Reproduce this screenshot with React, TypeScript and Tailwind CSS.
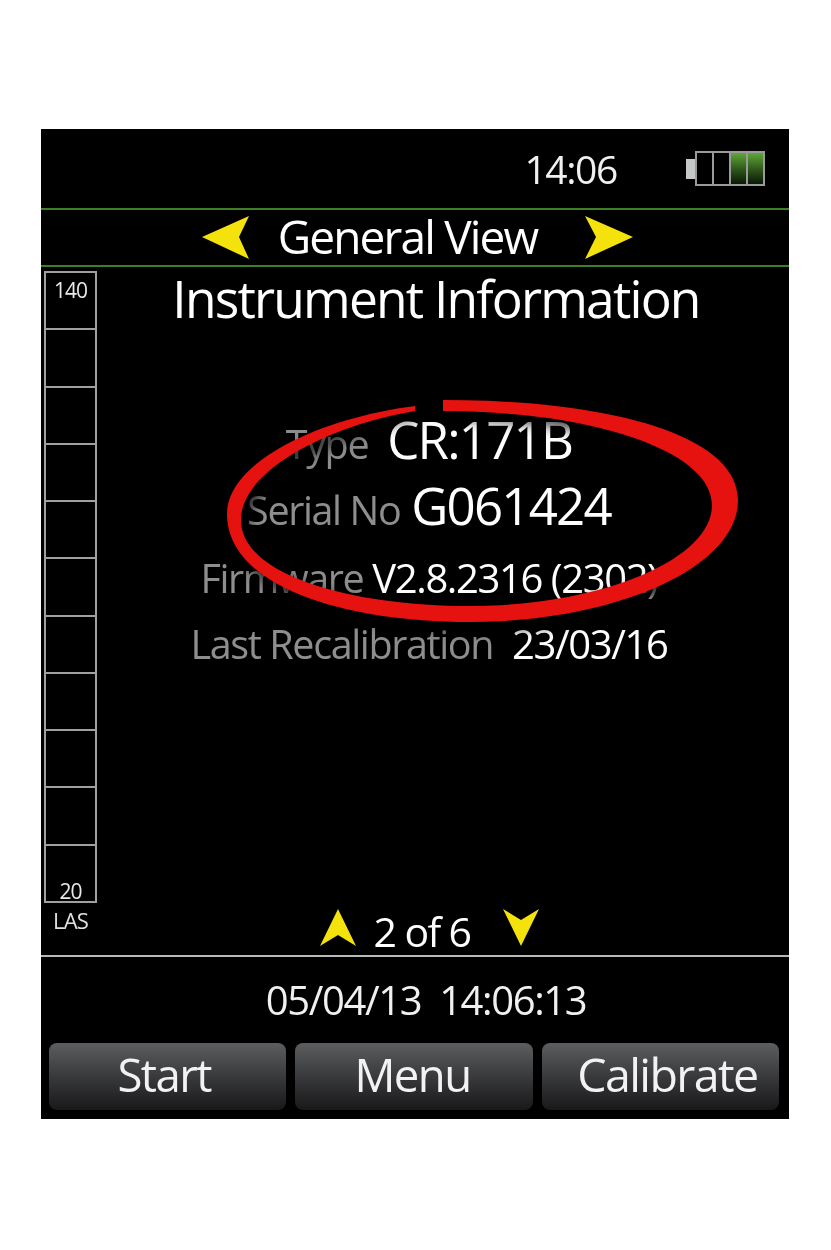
import React from 'react';

const FONT = "font-['Open_Sans','Noto_Sans',sans-serif]";

const Arrow = ({ points, box, className }: { points: string; box: string; className: string }) => (
  <svg viewBox={box} className={className}>
    <polygon points={points} fill="#f4e20c" />
  </svg>
);

const Battery = () => (
  <div className="flex items-center">
    <div className="w-[9px] h-[20px] bg-[#c4c8c6]" />
    <div className="flex w-[70px] h-[35px] border-2 border-[#9a9a9a]">
      <div className="flex-1 border-r-2 border-[#9a9a9a]" />
      <div className="flex-1 border-r-2 border-[#9a9a9a]" />
      <div className="flex-1 border-r-2 border-[#9a9a9a] bg-gradient-to-b from-[#5fa838] to-[#0a1a06]" />
      <div className="flex-1 bg-gradient-to-b from-[#5fa838] to-[#0a1a06]" />
    </div>
  </div>
);

const InfoRow = ({ label, value, gap, big }: { label: string; value: string; gap: string; big?: boolean }) => (
  <div className={`flex items-baseline justify-center h-[66px] ${big ? '' : 'pt-[12px]'} ${gap}`}>
    <span className="text-[39.5px] leading-none tracking-[-0.035em] text-[#8e8e8e]">{label}</span>
    <span className={`${big ? 'text-[51px]' : 'text-[40px]'} leading-none tracking-[-0.035em] text-white`}>{value}</span>
  </div>
);

const SoftButton = ({ children, className }: { children: string; className: string }) => (
  <button className="flex-1 basis-0 h-[67px] pb-[4px] rounded-lg bg-gradient-to-b from-[#5c5e60] to-[#19191a] text-[45.5px] leading-none tracking-[-0.035em] text-[#f2f2f2]">
    <span className={className}>{children}</span>
  </button>
);

export default function App() {
  return (
    <div className={`min-h-[1250px] bg-white pt-[129px] pl-[41px] ${FONT}`}>
      <div className="relative flex flex-col w-[748px] h-[990px] bg-black blur-[0.7px]">
        {/* Status bar */}
        <div className="flex items-center justify-end h-[81px] pr-[24px] border-b-2 border-[#3d7f26]">
          <span className="text-[39px] leading-none tracking-[-0.035em] text-[#f0f0f0] mr-[69px]">14:06</span>
          <Battery />
        </div>

        {/* View selector */}
        <div className="flex items-center justify-center h-[57px] pl-[5px] border-b-2 border-[#3d7f26]">
          <Arrow box="0 0 48 44" points="0,21 47,0 37,21 47,43" className="w-[48px] h-[44px]" />
          <span className="ml-[28px] mr-[48px] pb-[3px] text-[46px] leading-none tracking-[-0.04em] text-white">General View</span>
          <Arrow box="0 0 48 44" points="48,21 0,0 11,21 0,43" className="w-[48px] h-[44px]" />
        </div>

        {/* Main area */}
        <div className="flex flex-1 min-h-0">
          {/* Level scale */}
          <div className="flex flex-col w-[63px] pl-[3px] pt-[4px] shrink-0">
            <div className="flex flex-col w-[53px] h-[632px] border-2 border-[#a0a0a0]">
              {Array.from({ length: 11 }).map((_, i) => (
                <div key={i} className="relative flex-1 flex justify-center border-b-2 border-[#a0a0a0] last:border-b-0">
                  {i === 0 && <span className="mt-[7px] text-[21px] leading-none tracking-[-0.05em] text-[#e8e8e8]">140</span>}
                  {i === 10 && <span className="self-end -mb-[1px] text-[21px] leading-none tracking-[-0.05em] text-[#e8e8e8]">20</span>}
                </div>
              ))}
            </div>
            <span className="w-[53px] mt-[6px] text-center text-[22px] leading-none tracking-[-0.04em] text-[#e0e0e0]">LAS</span>
          </div>

          {/* Details */}
          <div className="flex flex-col flex-1 min-w-0">
            <h1 className="mt-[2px] mr-[21px] text-center text-[51.5px] leading-[58px] font-normal tracking-[-0.035em] text-white">
              Instrument Information
            </h1>
            <div className="flex flex-col mt-[87px] mr-[35px]">
              <InfoRow label="Type" value="CR:171B" gap="gap-[19px]" big />
              <InfoRow label="Serial No" value="G061424" gap="gap-[11px]" big />
              <InfoRow label="Firmware" value="V2.8.2316 (2302)" gap="gap-[9px]" />
              <InfoRow label="Last Recalibration" value="23/03/16" gap="gap-[19px]" />
            </div>
            <div className="flex items-end justify-center mt-auto mb-[9px] mr-[34px]">
              <Arrow box="0 0 36 37" points="18,0 36,37 18,26 0,37" className="w-[36px] h-[37px]" />
              <span className="ml-[18px] mr-[33px] -mb-[6px] text-[41px] leading-none tracking-[-0.04em] text-white">2 of 6</span>
              <Arrow box="0 0 36 37" points="0,0 18,11 36,0 18,37" className="w-[36px] h-[37px]" />
            </div>
          </div>
        </div>

        {/* Footer */}
        <div className="flex flex-col border-t-2 border-[#b8b8b8] pb-[9px] px-[8px]">
          <div className="flex justify-center items-center h-[86px] pl-[22px] text-[40px] leading-none tracking-[-0.035em] whitespace-pre text-[#f0f0f0]">
            05/04/13  14:06:13
          </div>
          <div className="flex gap-[9px] pr-[2px]">
            <SoftButton className="mr-[7px]">Start</SoftButton>
            <SoftButton className="mr-[3px]">Menu</SoftButton>
            <SoftButton className="ml-[14px] text-[46.5px]">Calibrate</SoftButton>
          </div>
        </div>

        {/* Hand drawn red circle over the text */}
        <svg viewBox="41 129 748 990" className="absolute inset-0 w-full h-full pointer-events-none drop-shadow-[5px_7px_7px_rgba(0,0,0,0.95)]">
          <path
            fill="#e5120f"
            d="M415 406 C320 418 226 462 227 515 C228 585 340 622 470 622 C610 622 738 570 738 500 C738 435 610 400 443 400 L443 411 C590 411 712 450 712 505 C712 560 600 606 470 606 C350 606 241 575 241 520 C241 470 330 425 415 411 Z"
          />
        </svg>
      </div>
    </div>
  );
}
